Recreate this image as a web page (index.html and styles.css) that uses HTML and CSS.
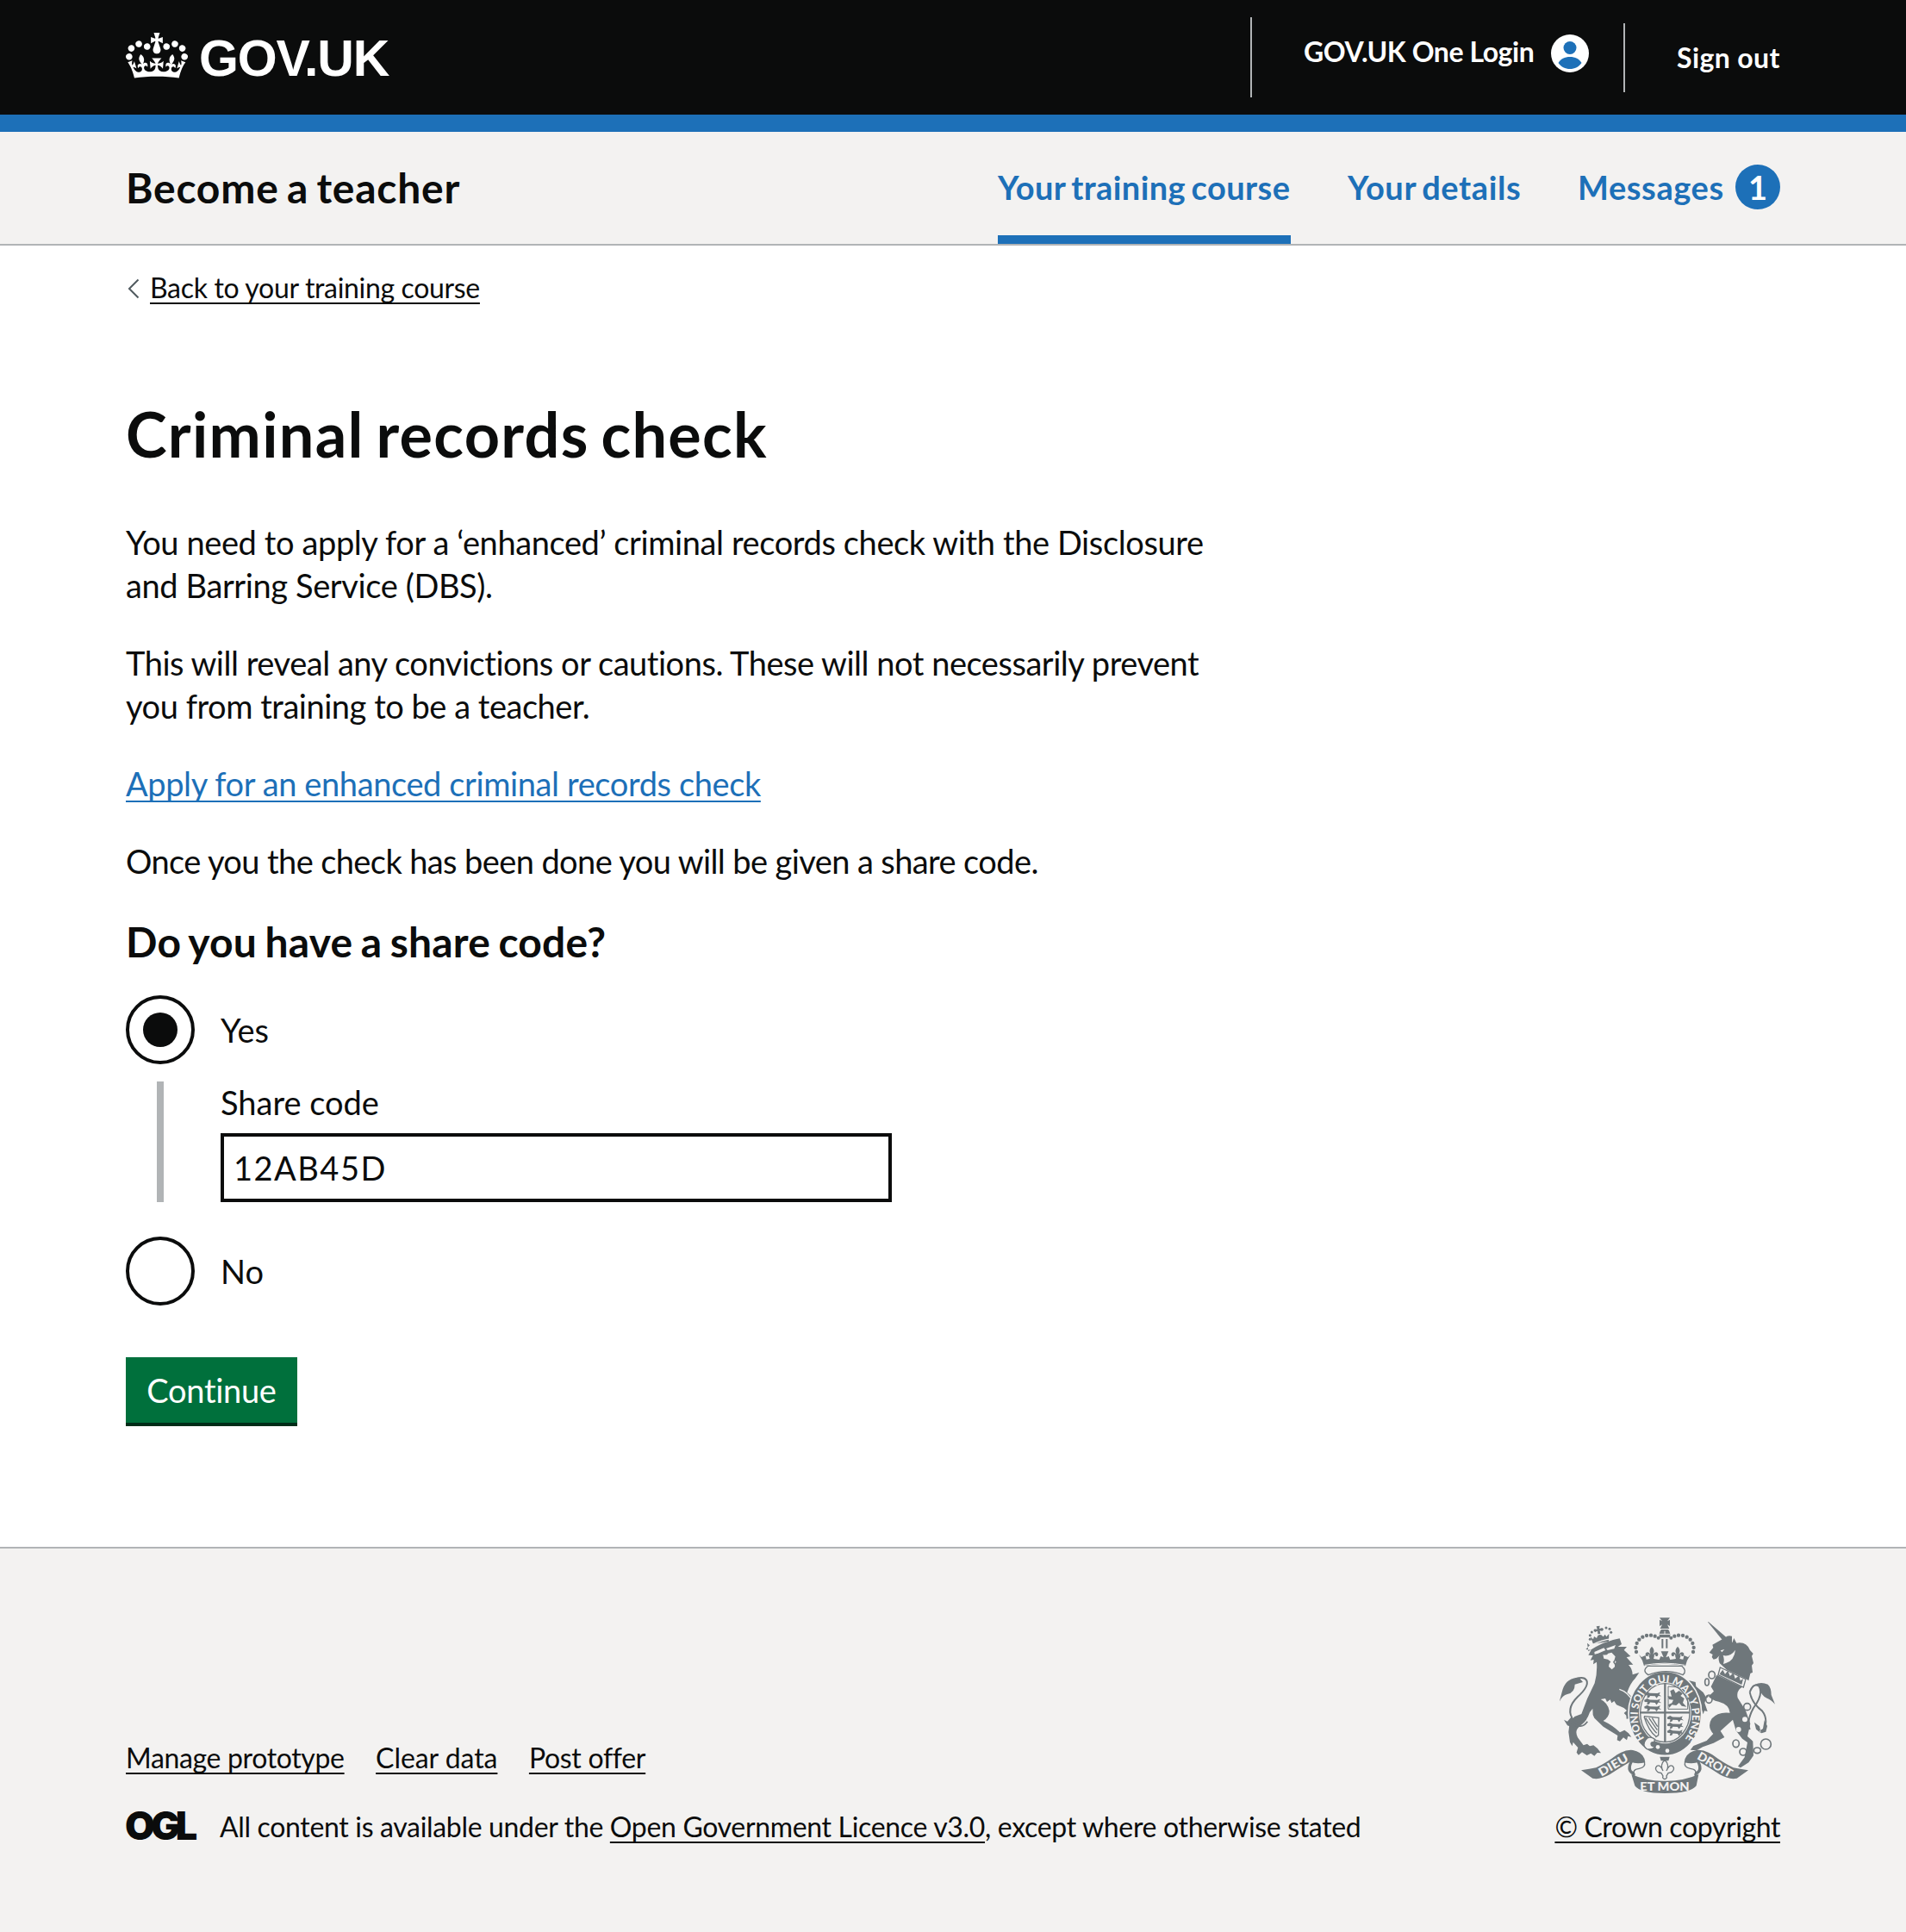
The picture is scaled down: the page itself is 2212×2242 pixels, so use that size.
FILE: index.html
```html
<!DOCTYPE html>
<html lang="en">
<head>
<meta charset="utf-8">
<title>Criminal records check - Become a teacher - GOV.UK</title>
<link rel="stylesheet" href="styles.css">
</head>
<body>
<header class="header">
  <div class="container header-row">
    <a class="logo" href="#">
      <svg class="logo-crown" viewBox="0 0 132 97" aria-hidden="true"><path fill="currentColor" fill-rule="evenodd" d="M25 30.2c3.5 1.5 7.7-.2 9.1-3.7 1.5-3.6-.2-7.8-3.9-9.2-3.6-1.4-7.6.3-9.1 3.9-1.4 3.5.3 7.5 3.9 9zM9 39.5c3.6 1.5 7.8-.2 9.2-3.7 1.5-3.6-.2-7.8-3.9-9.1-3.6-1.5-7.6.2-9.1 3.8-1.4 3.5.3 7.5 3.8 9zM4.4 57.2c3.5 1.5 7.7-.2 9.1-3.8 1.5-3.6-.2-7.7-3.9-9.1-3.5-1.5-7.6.3-9.1 3.8-1.4 3.5.3 7.6 3.9 9.1zm38.3-21.4c3.5 1.5 7.7-.2 9.1-3.8 1.5-3.6-.2-7.7-3.9-9.1-3.6-1.5-7.6.3-9.1 3.8-1.3 3.6.4 7.7 3.9 9.1zm64.4-5.6c-3.6 1.5-7.8-.2-9.1-3.7-1.5-3.6.2-7.8 3.8-9.2 3.6-1.4 7.7.3 9.2 3.9 1.3 3.5-.4 7.5-3.9 9zm15.9 9.3c-3.6 1.5-7.7-.2-9.1-3.7-1.5-3.6.2-7.8 3.7-9.1 3.6-1.5 7.7.2 9.2 3.8 1.5 3.5-.3 7.5-3.8 9zm4.7 17.7c-3.6 1.5-7.8-.2-9.2-3.8-1.5-3.6.2-7.7 3.9-9.1 3.6-1.5 7.7.3 9.2 3.8 1.3 3.5-.4 7.6-3.9 9.1zM89.3 35.8c-3.6 1.5-7.8-.2-9.2-3.8-1.4-3.6.2-7.7 3.9-9.1 3.6-1.5 7.7.3 9.2 3.8 1.4 3.6-.3 7.7-3.9 9.1zM69.7 17.7l8.9 4.7V9.3l-8.9 2.8c-.2-.3-.5-.6-.9-.9L72.4 0H59.6l3.5 11.2c-.3.3-.6.5-.9.9l-8.8-2.8v13.1l8.8-4.7c.3.3.6.7.9.9l-5 15.4v.1c-.2.8-.4 1.6-.4 2.4 0 4.1 3.1 7.5 7 8.1h.2c.3 0 .7.1 1 .1.4 0 .7 0 1-.1h.2c4-.6 7.1-4.1 7.1-8.1 0-.8-.1-1.7-.4-2.4V34l-5.1-15.4c.4-.2.7-.6 1-.9zM66 92.8c16.9 0 32.8 1.1 47.1 3.2 4-16.9 8.9-26.7 14-33.5l-9.6-3.4c1 4.9 1.1 7.2 0 10.2-1.5-1.4-3-4.3-4.2-8.7L108.6 76c2.8-2 5-3.2 7.5-3.3-4.4 9.4-10 11.9-13.6 11.2-4.3-.8-6.3-4.6-5.6-7.9 1-4.7 5.7-5.9 8-.5 4.3-8.7-3-11.4-7.6-8.8 7.1-7.2 7.9-13.5 2.1-21.1-8 6.1-8.1 12.3-4.5 20.8-4.7-5.4-12.1-2.5-9.5 6.2 3.4-5.2 7.9-2 7.2 3.1-.6 4.3-6.4 7.8-13.5 7.2-10.3-.9-10.9-8-11.2-13.8 2.5-.5 7.1 1.8 11 7.3L80.2 60c-4.1 4.4-8 5.3-12.3 5.4 1.4-4.4 8-11.6 8-11.6H55.5s6.4 7.2 7.9 11.6c-4.2-.1-8-1-12.3-5.4l1.4 16.4c3.9-5.5 8.5-7.7 10.9-7.3-.3 5.8-.9 12.8-11.1 13.8-7.2.6-12.9-2.9-13.5-7.2-.7-5 3.8-8.3 7.1-3.1 2.7-8.7-4.6-11.6-9.4-6.2 3.7-8.5 3.6-14.7-4.6-20.8-5.8 7.6-5 13.9 2.2 21.1-4.7-2.6-11.9.1-7.7 8.8 2.3-5.5 7.1-4.2 8.1.5.7 3.3-1.3 7.1-5.7 7.9-3.5.7-9-1.8-13.5-11.2 2.5.1 4.7 1.3 7.5 3.3l-4.7-15.4c-1.2 4.4-2.7 7.2-4.3 8.7-1.1-3-.9-5.3 0-10.2l-9.5 3.4c5 6.9 9.9 16.7 14 33.5 14.8-2.1 30.8-3.2 47.7-3.2z"/></svg>
      <span class="logo-text">GOV.UK</span>
    </a>
    <nav class="account">
      <a class="account-login" href="#"><span>GOV.UK One Login</span>
        <svg class="account-icon" viewBox="0 0 44 44" aria-hidden="true"><circle cx="22" cy="22" r="22" fill="#fff"/><circle cx="22" cy="15.5" r="7.5" fill="#1d70b8"/><path fill="#1d70b8" d="M8.5 33C11 28.500 16 26 22 26s11 2.500 13.500 7C32.500 37.500 27.500 40 22 40S11.500 37.500 8.500 33z"/></svg>
      </a>
      <a class="account-signout" href="#">Sign out</a>
    </nav>
  </div>
</header>
<section class="service">
  <div class="container service-row">
    <span class="service-name">Become a teacher</span>
    <nav class="service-nav">
      <a class="service-link service-link-active" href="#">Your training course</a>
      <a class="service-link service-link-details" href="#">Your details</a>
      <a class="service-link service-link-messages" href="#">Messages <span class="badge">1</span></a>
    </nav>
  </div>
</section>
<div class="container">
  <a class="back" href="#"><svg class="back-arrow" viewBox="0 0 14 24" aria-hidden="true"><path d="M12.500 1.500L2 12l10.500 10.500" fill="none" stroke="#505a5f" stroke-width="2"/></svg><span class="back-text">Back to your training course</span></a>
  <main class="main">
    <h1 class="title">Criminal records check</h1>
    <p class="body">You need to apply for a ‘enhanced’ criminal records check with the Disclosure<br>and Barring Service (DBS).</p>
    <p class="body body-reveal">This will reveal any convictions or cautions. These will not necessarily prevent<br>you from training to be a teacher.</p>
    <p class="body"><a class="link" href="#">Apply for an enhanced criminal records check</a></p>
    <p class="body body-once">Once you the check has been done you will be given a share code.</p>
    <h2 class="question">Do you have a share code?</h2>
    <div class="radio"><span class="radio-ring"><span class="radio-dot"></span></span><span class="radio-label">Yes</span></div>
    <div class="conditional">
      <label class="field-label" for="code">Share code</label>
      <input class="field" id="code" type="text" value="12AB45D">
    </div>
    <div class="radio"><span class="radio-ring"></span><span class="radio-label">No</span></div>
    <button class="button" type="button">Continue</button>
  </main>
</div>
<footer class="footer">
  <div class="container footer-row">
    <div class="footer-meta">
      <div class="footer-links"><a href="#" class="f-manage">Manage prototype</a><a href="#" class="f-clear">Clear data</a><a href="#" class="f-post">Post offer</a></div>
      <div class="licence"><span class="ogl">OGL</span><span class="licence-text">All content is available under the <a href="#">Open Government Licence v3.0</a>, except where otherwise stated</span></div>
    </div>
    <div class="copyright">
      <svg class="crest" viewBox="90 50 750 612" aria-hidden="true">
        <defs>
          <path id="garter" d="M388 474A95 117 0 1 1 526 474"/>
          <g id="lionet"><path d="M2 6l8-5 7 4 20 1 8-4-3 8 6 6-8-2-5 8-4-7-13-1-3 6-6 1 2-8-8-1z"/></g>
          <g id="lions"><use href="#lionet"/><use href="#lionet" y="22"/><use href="#lionet" y="44"/></g>
          <g id="beads"><circle cx="357" cy="170" r="6.500"/><circle cx="355" cy="155" r="6.500"/><circle cx="359" cy="140" r="6.500"/><circle cx="367" cy="127" r="6.500"/><circle cx="379" cy="118" r="6.500"/><circle cx="393" cy="113" r="6.500"/><circle cx="408" cy="112" r="6.500"/><circle cx="422" cy="115" r="6.500"/><circle cx="434" cy="121" r="6"/></g>
          <g id="fleur"><path d="M0-27q13 13 4 27 12-13 18-2 1 11-9 9 2-5-2-6-6 1-6 10l4 14H-9l4-14q0-9-6-10-4 1-2 6-10 2-9-9 6-11 18 2-9-14 4-27z"/></g>
        </defs>
        <!-- lion supporter -->
        <g class="ink">
          <path d="M207 142l-10-25 10 9 3-10 9 6 4-9 6-3 6 1 7 6 6-8 5 8 9-10-1 26z"/>
          <circle cx="196" cy="112" r="4.500"/><circle cx="196" cy="126" r="4.500"/><circle cx="202" cy="101" r="4.500"/><circle cx="213" cy="95" r="4.500"/><circle cx="238" cy="91" r="4.500"/><circle cx="252" cy="86" r="4.500"/><circle cx="264" cy="90" r="4.500"/><circle cx="269" cy="102" r="4.500"/><path d="M218 81l12-2-2 10 10-2 1 10-9-1 2 11-9 1-1-11-9 4-1-10 9 0z"/>
          <path d="M190 168Q245 132 299 123l7 20-13 9 31 0-10 11 23 22-14 4 23 25-16 1q14 15 14 34l23-7-14 20q-17 17-28 49 24 20 32 43l8 41-8 11-17-6-17 3-1-12-8-8 10-9-10-9-26-11-8-13-9 7-5-12-11 8-6-12-16 3q25 12 30 40 1 20-21 35 34 16 58 40l16-8 14 11 10 13-12-3-4 14-12-9-12 13-10-4 2-16-50-31-31-30-5-11-1-22-10 13q-9 29-36 50-18 13-6 38l20 27 13-5 9 8 13-3 14 11 12 16-13-1-10 11-12-9-14 7-17-11-12 10-7-9 5-17-17-19-3 14-8-14-5-35 4-34 17-20 24-9q18-54 46-107 10-35 7-74l-12 8 2-16-12 2 9-17-16-1 10-18-19-2 14-14-9-8z"/>
          <path d="M132 395l-15 17-12-6 12 20 20 7 17-7-13-10z"/>
        </g>
        <path class="cut" d="M204 145q32-16 68-21" stroke-width="4"/>
        <path class="lines" d="M182 402Q165 430 140 410 108 370 153 326 193 290 184 269 175 254 145 264" stroke-width="6"/><path class="lines" d="M187 412Q165 443 132 416" stroke-width="5"/>
        <path class="ink" d="M150 259q-42 5-52 51l-9 34q10-23 28-27 26-6 26-34l28-8-12-14z"/>
        <path class="paper" d="M211 170l33-14 6 8-26 11-12 3zM252 158l33-12-5 13-23 5zM241 180q14 3 18-5l12-3 13 14-3 11-5 8q8 9 6 17l-10 9-11-10q-1-8 7-17l-10-8-14-3zM283 200l-1 10 5-5z"/>
        <path class="cut" d="M298 300q30 8 51 48l14 52" stroke-width="4"/>
        <!-- unicorn supporter -->
        <path class="ink" d="M606 66l2-1 90 78-20 12z"/>
        <path class="ink" d="M690 140l7-18 9 17q35-6 47 25l11 12-5 8 6 25-6 8 3 24-8 4-6 25-10-7-66-31-25-23q-7-19 0-27l-11 11-10 3-6-8 3-9-12-7 14-17-3-10 45-25q7-9 23-5z"/>
        <path class="paper" d="M650 165l14-4-9 10zM660 212q5-16-1-30 25 6 43-19-4 37-33 46z"/>
        <path d="M649 224l89 41-8 28-88-43z" class="outlined"/>
        <path class="ink" d="M650 242l8-10 8 15 10-12 7 19 12-11 6 20 14-11 4 18 10-6-5 20-77-36z"/>
        <path class="ink" d="M637 250l89 42q-22 11-16 38l28 45 16 45-10 44 19 17 2 50-17 24-28 18-9-5 23-31 10-52-18-13-22-28-11-38-30 27-13 12 14 22-38 20-38 14-21 12-22-2 11-14 46-18 23-24q-23-26-5-53 21-25 63-20-2-29-39-39-25-5-41-24l-8 29 10 29-11-2-4 12-5-15-9-2-5-14 5-30-16 12-10-18-12 1 2 16-13-20 6-17 14-4-8-9-13 5-3 13-10-15 8-12 21-8 21 5 2 15 25 21 12 20 25-24-10-16z"/>
        <path class="lines" d="M752 440Q740 410 765 365 800 318 785 290 765 275 752 310" stroke-width="6"/>
        <path class="lines" d="M752 310Q760 350 795 375 815 400 804 437" stroke-width="6"/><path class="ink" d="M770 283q22-10 45 0 12 11 12 37l13 32q-15-17-28-21-22-9-28-41zM768 415l6 24 17 14-5-24zM803 408l10 20-5 20-15 5-8-8 13-8z"/>
        <g class="paper"><circle cx="743" cy="361" r="10"/><circle cx="735" cy="405" r="9"/><circle cx="713" cy="440" r="9"/></g>
        <g class="lines" stroke-width="5"><ellipse cx="620" cy="250" rx="11" ry="13"/><ellipse cx="603" cy="275" rx="7" ry="12"/><ellipse cx="610" cy="334" rx="11" ry="14"/><circle cx="743" cy="361" r="12"/><ellipse cx="704" cy="489" rx="11" ry="13"/><circle cx="729" cy="518" r="12"/><ellipse cx="778" cy="513" rx="12" ry="10"/><circle cx="808" cy="491" r="18"/></g>
        <!-- garter and shield -->
        <ellipse class="ink halo" cx="457" cy="384" rx="127" ry="147"/>
        <ellipse class="paper" cx="457" cy="382" rx="91" ry="107"/>
        <ellipse class="lines" cx="457" cy="382" rx="86" ry="102" stroke-width="4"/>
        <path class="lines" d="M457 280v203M371 381h172" stroke-width="7"/>
        <g class="ink"><use href="#lions" transform="translate(382 308) scale(1.300 1.050)"/><use href="#lions" transform="translate(462 391) scale(1.250 1.080)"/></g>
        <path class="lines" d="M468 290l36 3 32 36v40h-68z" stroke-width="3"/>
        <path class="ink" d="M475 306l12-6 7 13 12-8 13 10-8 8 13 9-5 15 13 14-17-3-9-11-10 9-15-2-9 10-4-10 13-6 5-11-15-2-5-11 14 1z"/>
        <path class="lines" d="M384 395q17 52 42 70M384 394l51 5-1 61-10 7M390 400q24 40 38 53M401 400l29 42M412 400l19 30" stroke-width="4"/>
        <text class="crest-text" font-size="36"><textPath href="#garter" startOffset="4" textLength="500">HONI SOIT QUI MAL Y PENSE</textPath></text>
        <path class="outlined" d="M421 474q-19-15-32 3-13 18 5 31 22 4 28-11-13 4-14-6-1-9 11-6z"/>
        <g class="paper"><circle cx="432" cy="501" r="7"/><circle cx="465" cy="514" r="7"/></g>
        <!-- royal crown -->
        <path class="outlined" d="M398 219h117q20 17 4 31-57-24-120 0-24-14-1-31z"/>
        <g class="ink">
          <use href="#beads"/><use href="#beads" transform="matrix(-1 0 0 1 912 0)"/>
          <path d="M438 51h36l-9 12 9-5v22l-9-5 7 14h-32l7-14-9 5V58l9 5zM444 92h24q8 8 7 28h-38q-1-20 7-28zM445 125h6v32h-6zM460 125h6v32h-6z"/>
          <path d="M384 219q-4-20-18-40l9 9 14-6 3 14 12-2-4-12h20l-3 12 20 3 5-12 10 4-9-21h26l-9 21 10-4 5 12 20-3-3-12h20l-4 12 12 2 3-14 14 6 9-9q-14 20-18 40-72-15-144 0z"/>
          <use href="#fleur" transform="translate(411 178)"/><use href="#fleur" transform="translate(501 178)"/>
        </g>
        <path class="cut" d="M386 216q70-13 140 0M438 108h36M456 97v12" stroke-width="3"/>
        <!-- motto scroll -->
        <path class="ink" d="M439 535h34l-4 14h-26z"/>
        <path class="outlined" d="M456 546q18 18 6 38 9-23 21-17 11 11-4 22l-11 3-6 10q4 8-6 11-10-3-6-11l-6-10-11-3q-15-11-4-22 12-6 21 17-12-20 6-38z"/>
        <g id="scroll-end"><path class="ink" d="M165 582Q195 578 217 573 250 558 290 528 320 509 345 512 385 520 388 555 355 562 337 552 297 575 264 597 230 616 205 610z"/><path class="lines" d="M385 552q6 20-18 24-27 4-15 22" stroke-width="4"/><path class="ink" d="M338 546q-22 36 5 51l8 18q5-29-9-31-9-13 6-36z"/></g>
        <use href="#scroll-end" transform="matrix(-1 0 0 1 912 0)"/>
        <path class="ink" d="M340 596q53 24 116 23 66 1 118-23l-8 40q-19 26-110 26-86 0-104-26z"/>
        <g class="crest-text" text-anchor="middle"><text font-size="41" transform="translate(284 576) rotate(-30)" textLength="112" lengthAdjust="spacingAndGlyphs">DIEU</text><text font-size="42" x="456" y="654" textLength="172" lengthAdjust="spacingAndGlyphs">ET MON</text><text font-size="41" transform="translate(624 575) rotate(30)" textLength="134" lengthAdjust="spacingAndGlyphs">DROIT</text></g>
      </svg>
      <a href="#" class="f-crown">© Crown copyright</a>
    </div>
  </div>
</footer>
</body>
</html>
```
FILE: styles.css
```css
* { box-sizing: border-box; }
body { margin: 0; background: #fff; color: #0b0c0c; font-family: Lato, "Open Sans", sans-serif; font-size: 38px; line-height: 50px; }
a { color: inherit; }
h1, h2, p { margin: 0; }
.container { width: 1920px; margin: 0 auto; }

.header { height: 153px; background: #0b0c0c; border-bottom: 20px solid #1d70b8; color: #fff; }
.header-row { display: flex; justify-content: space-between; align-items: flex-start; }
.logo { display: flex; align-items: flex-start; gap: 13px; padding-top: 38px; text-decoration: none; }
.logo-crown { width: 72px; height: 53px; }
.logo-text { font: 700 59px/60px "Liberation Sans", Arial, sans-serif; letter-spacing: -1.2px; }
.account { display: flex; font-size: 32px; line-height: 40px; font-weight: 700; }
.account a { text-decoration: none; border-left: 2px solid #b1b4b6; }
.account-login { display: flex; justify-content: space-between; width: 433px; height: 93px; margin-top: 20px; padding: 20px 40px 0 60px; letter-spacing: -.45px; white-space: nowrap; }
.account-icon { width: 44px; height: 44px; flex: none; }
.account-signout { width: 182px; height: 80px; margin-top: 27px; padding: 20px 0 0 60px; letter-spacing: .4px; white-space: nowrap; }

.service { background: #f3f2f1; border-bottom: 2px solid #b1b4b6; }
.service-row { display: flex; justify-content: space-between; height: 130px; }
.service-name { padding-top: 35px; font-size: 48px; line-height: 60px; font-weight: 700; letter-spacing: .75px; word-spacing: -3px; }
.service-nav { display: flex; gap: 66px; font-weight: 700; color: #1d70b8; }
.service-link { display: flex; padding-top: 39px; text-decoration: none; white-space: nowrap; }
.service-link-active { width: 340px; border-bottom: 10px solid #1d70b8; letter-spacing: .4px; word-spacing: -3px; }
.service-link-details { width: 202px; letter-spacing: .6px; word-spacing: -3px; }
.service-link-messages { width: 235px; margin-left: -1px; justify-content: space-between; letter-spacing: .6px; }
.badge { width: 52px; height: 52px; margin-top: -1px; border-radius: 50%; background: #1d70b8; color: #fff; text-align: center; letter-spacing: 0; line-height: 52px; }

.back { display: flex; align-items: flex-start; margin-top: 29px; font-size: 32px; line-height: 40px; text-decoration: none; }
.back-arrow { width: 14px; height: 24px; margin: 9px 12px 0 2px; }
.back-text, .footer a, .link { text-decoration: underline; text-decoration-thickness: 2px; text-underline-offset: 5px; text-decoration-skip-ink: none; }
.back-text { letter-spacing: -.33px; }

.main { padding: 109px 0 144px; }
.title { margin-bottom: 61px; font-size: 72px; line-height: 80px; letter-spacing: 1.3px; word-spacing: -5px; }
.body { margin-bottom: 40px; letter-spacing: -.39px; }
.body-reveal { letter-spacing: -.47px; }
.body-once { margin-bottom: 39px; letter-spacing: -.6px; }
.link { color: #1d70b8; }
.question { margin-bottom: 32px; font-size: 48px; line-height: 60px; letter-spacing: .2px; word-spacing: -2.5px; }
.radio { display: flex; height: 80px; }
.radio-ring { display: grid; place-items: center; width: 80px; height: 80px; border: 4px solid #0b0c0c; border-radius: 50%; }
.radio-dot { width: 40px; height: 40px; border-radius: 50%; background: #0b0c0c; }
.radio-label { padding: 15px 0 0 30px; }
.conditional { display: flex; flex-direction: column; align-items: flex-start; height: 140px; margin: 20px 0 40px 36px; padding-left: 66px; border-left: 8px solid #b1b4b6; }
.field-label { margin: -1px 0 11px; }
.field { width: 779px; height: 80px; padding: 0 11px; border: 4px solid #0b0c0c; background: #fff; color: #0b0c0c; font: 38px/50px Lato, sans-serif; letter-spacing: 1.5px; border-radius: 0; }
.button { display: block; width: 199px; height: 76px; margin-top: 60px; padding: 13px 0; border: 0; background: #00703c; box-shadow: 0 4px 0 #002d18; color: #fff; font: 38px/50px Lato, sans-serif; letter-spacing: -.3px; text-align: center; }

.footer { background: #f3f2f1; border-top: 2px solid #b1b4b6; padding: 80px 0 102px; font-size: 32px; line-height: 40px; }
.footer-row { display: flex; justify-content: space-between; align-items: flex-end; }
.footer-links { display: flex; gap: 36.500px; margin-bottom: 40px; }
.f-manage { letter-spacing: -.35px; }
.f-clear { letter-spacing: -.06px; }
.f-post { letter-spacing: -.3px; }
.licence { display: flex; }
.ogl { width: 110px; margin: -1px 0 0 -1px; font: 900 45px/40px Inter, sans-serif; letter-spacing: -5px; }
.licence-text { letter-spacing: -.33px; }
.copyright { display: flex; flex-direction: column; align-items: center; }
.crest { width: 250px; height: 204px; margin-bottom: 19px; }
.f-crown { letter-spacing: -.4px; }

.ink { fill: #6f777b; }
.paper { fill: #f3f2f1; }
.outlined { fill: #f3f2f1; stroke: #6f777b; stroke-width: 4; }
.lines { fill: none; stroke: #6f777b; }
.cut { fill: none; stroke: #f3f2f1; }
.halo { stroke: #f3f2f1; stroke-width: 5; }
.crest-text { fill: #f3f2f1; font-family: Lato, sans-serif; font-weight: 900; }
```
